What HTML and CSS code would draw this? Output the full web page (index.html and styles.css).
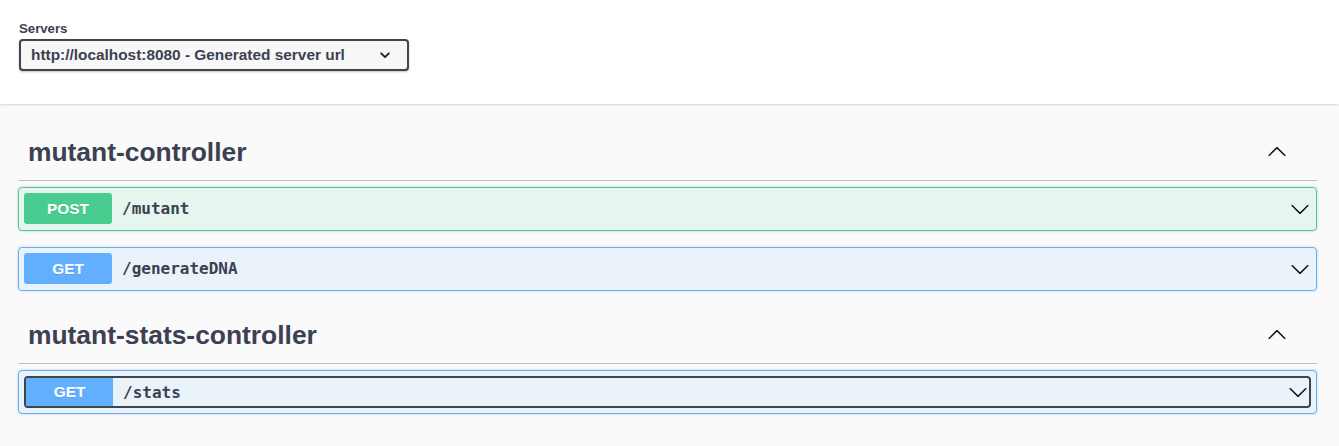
FILE: index.html
```html
<!DOCTYPE html>
<html lang="en">
<head>
<meta charset="utf-8">
<title>Swagger UI</title>
<link rel="stylesheet" href="styles.css">
</head>
<body>
<header class="scheme-container">
  <span class="servers-title">Servers</span>
  <div class="server-select">
    <span>http://localhost:8080 - Generated server url</span>
    <svg class="select-arrow" width="10" height="7" viewBox="0 0 10 7"><polyline points="1.2,1.3 5,5.1 8.8,1.3" fill="none" stroke="#1b1b1b" stroke-width="1.8" stroke-linecap="round" stroke-linejoin="round"/></svg>
  </div>
</header>
<main class="wrapper">
  <section class="tag-section">
    <h3 class="tag">
      <span class="tag-name">mutant-controller</span>
      <svg class="tag-arrow" width="20" height="20" viewBox="0 0 20 20"><path transform="rotate(180 10 10)" d="M17.418 6.109c.272-.268.709-.268.979 0s.271.701 0 .969l-7.908 7.83c-.27.268-.707.268-.979 0l-7.908-7.83c-.27-.268-.27-.701 0-.969.271-.268.709-.268.979 0L10 13.25l7.418-7.141z"/></svg>
    </h3>
    <div class="opblock post">
      <div class="summary">
        <div class="row">
          <span class="method">POST</span>
          <span class="path">/mutant</span>
          <svg class="arrow" width="20" height="20" viewBox="0 0 20 20"><path d="M17.418 6.109c.272-.268.709-.268.979 0s.271.701 0 .969l-7.908 7.83c-.27.268-.707.268-.979 0l-7.908-7.830c-.27-.268-.27-.701 0-.969.271-.268.709-.268.979 0L10 13.25l7.418-7.141z"/></svg>
        </div>
      </div>
    </div>
    <div class="opblock get">
      <div class="summary">
        <div class="row">
          <span class="method">GET</span>
          <span class="path">/generateDNA</span>
          <svg class="arrow" width="20" height="20" viewBox="0 0 20 20"><path d="M17.418 6.109c.272-.268.709-.268.979 0s.271.701 0 .969l-7.908 7.83c-.27.268-.707.268-.979 0l-7.908-7.83c-.27-.268-.27-.701 0-.969.271-.268.709-.268.979 0L10 13.25l7.418-7.141z"/></svg>
        </div>
      </div>
    </div>
  </section>
  <section class="tag-section">
    <h3 class="tag">
      <span class="tag-name">mutant-stats-controller</span>
      <svg class="tag-arrow" width="20" height="20" viewBox="0 0 20 20"><path transform="rotate(180 10 10)" d="M17.418 6.109c.272-.268.709-.268.979 0s.271.701 0 .969l-7.908 7.83c-.27.268-.707.268-.979 0l-7.908-7.83c-.27-.268-.27-.701 0-.969.271-.268.709-.268.979 0L10 13.25l7.418-7.141z"/></svg>
    </h3>
    <div class="opblock get">
      <div class="summary">
        <div class="row focused">
          <span class="method">GET</span>
          <span class="path">/stats</span>
          <svg class="arrow" width="20" height="20" viewBox="0 0 20 20"><path d="M17.418 6.109c.272-.268.709-.268.979 0s.271.701 0 .969l-7.908 7.83c-.27.268-.707.268-.979 0l-7.908-7.83c-.27-.268-.27-.701 0-.969.271-.268.709-.268.979 0L10 13.25l7.418-7.141z"/></svg>
        </div>
      </div>
    </div>
  </section>
</main>
</body>
</html>
```
FILE: styles.css
```css
html, body {
  margin: 0;
  padding: 0;
  background: #fafafa;
  font-family: "Liberation Sans", Arial, sans-serif;
  color: #3b4151;
}

.scheme-container {
  display: block;
  background: #fff;
  box-shadow: 0 1px 2px 0 rgba(0, 0, 0, 0.15);
  padding: 21px 20px 33px 19px;
  margin: 0 0 20px;
}

.servers-title {
  display: block;
  font-size: 13.2px;
  font-weight: 700;
  line-height: 15px;
  margin-bottom: 3px;
}

.server-select {
  display: flex;
  align-items: center;
  justify-content: space-between;
  width: 390px;
  height: 32px;
  box-sizing: border-box;
  border: 2px solid #41444e;
  border-radius: 4px;
  background: #f7f7f7;
  box-shadow: 0 1px 2px 0 rgba(0, 0, 0, 0.25);
  padding: 0 17px 0 10px;
  font-size: 15.4px;
  font-weight: 700;
}

.select-arrow {
  display: block;
}

.wrapper {
  padding: 0 22px 0 18px;
}

.tag {
  display: flex;
  align-items: center;
  height: 57px;
  box-sizing: border-box;
  margin: 0 0 6px;
  padding: 0 30px 0 10px;
  border-bottom: 1px solid rgba(59, 65, 81, 0.3);
  font-size: 26.4px;
  font-weight: 700;
}

.tag-name {
  flex: 1;
}

.tag-arrow {
  display: block;
  fill: #111;
}

.opblock {
  border: 1px solid;
  border-radius: 4px;
  box-shadow: 0 0 3px rgba(0, 0, 0, 0.19);
  margin: 0 0 16px;
}

.opblock.post {
  border-color: #49cc90;
  background: rgba(73, 204, 144, 0.1);
}

.opblock.get {
  border-color: #61affe;
  background: rgba(97, 175, 254, 0.1);
}

.summary {
  padding: 5px;
}

.row {
  display: flex;
  align-items: stretch;
  height: 32px;
  box-sizing: border-box;
  padding-bottom: 1px;
  border-radius: 4px;
}

.row.focused {
  border: 2px solid #41444e;
  padding: 0;
}

.method {
  display: flex;
  align-items: center;
  justify-content: center;
  width: 88px;
  flex: none;
  border-radius: 3px;
  color: #fff;
  font-size: 15.4px;
  font-weight: 700;
  text-shadow: 0 1px 0 rgba(0, 0, 0, 0.1);
}

.row.focused .method {
  width: 87px;
  border-radius: 2px 0 0 2px;
}

.post .method {
  background: #49cc90;
}

.get .method {
  background: #61affe;
}

.path {
  flex: 1;
  align-self: center;
  padding: 0 10px;
  font-family: "DejaVu Sans Mono", "Liberation Mono", monospace;
  font-size: 16px;
  font-weight: 700;
  color: #3b4151;
}

.arrow {
  display: block;
  align-self: center;
  flex: none;
  margin-right: 1px;
  fill: #111;
}
```
